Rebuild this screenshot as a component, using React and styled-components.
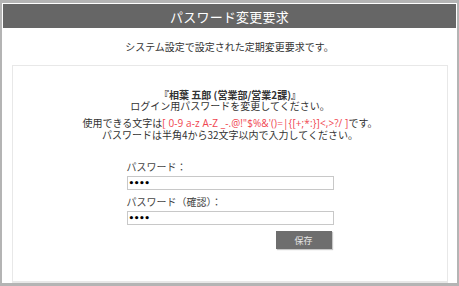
import React from "react";
import styled, { createGlobalStyle } from "styled-components";

const Global = createGlobalStyle`
  html, body { margin: 0; padding: 0; background: #fff; }
  body { font-family: "Noto Sans CJK JP", "Open Sans", sans-serif; color: #333; }
  * { box-sizing: border-box; }
`;

const Frame = styled.div`
  width: 459px;
  height: 286px;
  border: 2px solid #b4b4b4;
  border-top-width: 3px;
  border-bottom-width: 3px;
  padding: 1px 1px 0 1px;
  display: flex;
  flex-direction: column;
`;

const Header = styled.div`
  height: 24px;
  background: #666666;
  color: #fff;
  font-size: 13px;
  display: flex;
  align-items: center;
  justify-content: center;
  letter-spacing: 0.2px;
`;

const Notice = styled.div`
  height: 37px;
  font-size: 10px;
  display: flex;
  align-items: center;
  justify-content: center;
  color: #333;
`;

const Panel = styled.div`
  flex: 1;
  margin: 0 8px 0 9px;
  border: 1px solid #e8e8e8;
  border-bottom: 2px solid #e8e8e8;
  display: flex;
  flex-direction: column;
  align-items: center;
  padding-top: 23px;
`;

const Info = styled.div`
  font-size: 10px;
  line-height: 11px;
  text-align: center;
  margin-bottom: ${(p) => p.$gap || 0}px;
`;

const Name = styled.div`
  font-weight: bold;
`;

const Red = styled.span`
  color: #f0454f;
  font-family: "Open Sans", "Noto Sans CJK JP", sans-serif;
  letter-spacing: 0.1px;
`;

const Form = styled.div`
  width: 207px;
  display: flex;
  flex-direction: column;
  margin-top: 19px;
`;

const Label = styled.div`
  font-size: 10px;
  height: 15px;
  line-height: 15px;
  color: #444;
  margin-bottom: 2px;
`;

const Input = styled.div`
  height: 14px;
  border: 1px solid #c8c8c8;
  display: flex;
  align-items: center;
  padding-left: 1px;
  font-size: 9px;
  font-family: "DejaVu Sans", sans-serif;
  font-weight: bold;
  letter-spacing: -0.5px;
  color: #000;
  margin-bottom: ${(p) => p.$mb || 0}px;
`;

const Actions = styled.div`
  display: flex;
  justify-content: flex-end;
  padding-right: 2px;
  margin-top: 6px;
`;

const Button = styled.button`
  width: 56px;
  height: 18px;
  background: #6e6e6e;
  border: none;
  box-shadow: 1px 1px 1px #c8c8c8;
  color: #e6e6e6;
  font-size: 9px;
  font-family: "Noto Sans CJK JP", sans-serif;
  padding: 0;
`;

const CHARS = "[ 0-9 a-z A-Z _-.@!\"$%&'()=|{[+;*:}]<,>?/ ]";

export default function App() {
  return (
    <>
      <Global />
      <Frame>
        <Header>パスワード変更要求</Header>
        <Notice>システム設定で設定された定期変更要求です。</Notice>
        <Panel>
          <Info $gap={6}>
            <Name>『相葉 五郎 (営業部/営業2課)』</Name>
            <div>ログイン用パスワードを変更してください。</div>
          </Info>
          <Info>
            <div>
              使用できる文字は<Red>{CHARS}</Red>です。
            </div>
            <div>パスワードは半角4から32文字以内で入力してください。</div>
          </Info>
          <Form>
            <Label>パスワード：</Label>
            <Input $mb={4}>••••</Input>
            <Label>パスワード（確認）：</Label>
            <Input>••••</Input>
            <Actions>
              <Button>保存</Button>
            </Actions>
          </Form>
        </Panel>
      </Frame>
    </>
  );
}
